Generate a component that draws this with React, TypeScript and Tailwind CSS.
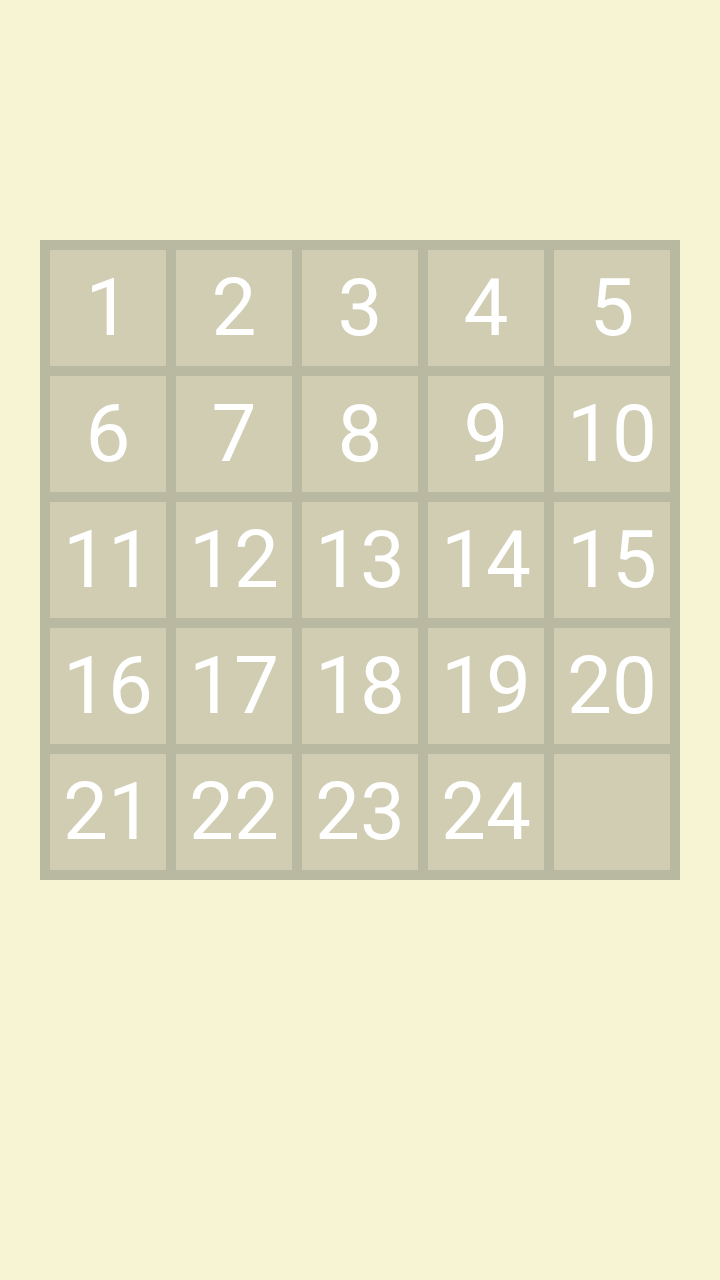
const tiles = [
  1, 2, 3, 4, 5, 6, 7, 8, 9, 10, 11, 12, 13, 14, 15, 16, 17, 18, 19, 20, 21, 22, 23, 24, 0,
];

const App = () => {
  return (
    <div className="min-h-[1280px] w-[720px] bg-[#f7f4d4] pt-[240px] px-10 font-['Roboto',sans-serif]">
      <div className="grid grid-cols-5 gap-[10px] p-[10px] bg-[#b9b8a0] w-[640px]">
        {tiles.map((n) => (
          <div
            key={n}
            className="h-[116px] flex items-center justify-center bg-[#d0cdb3] text-white text-[80px] leading-none"
          >
            {n ? n : ""}
          </div>
        ))}
      </div>
    </div>
  );
};

export default App;
